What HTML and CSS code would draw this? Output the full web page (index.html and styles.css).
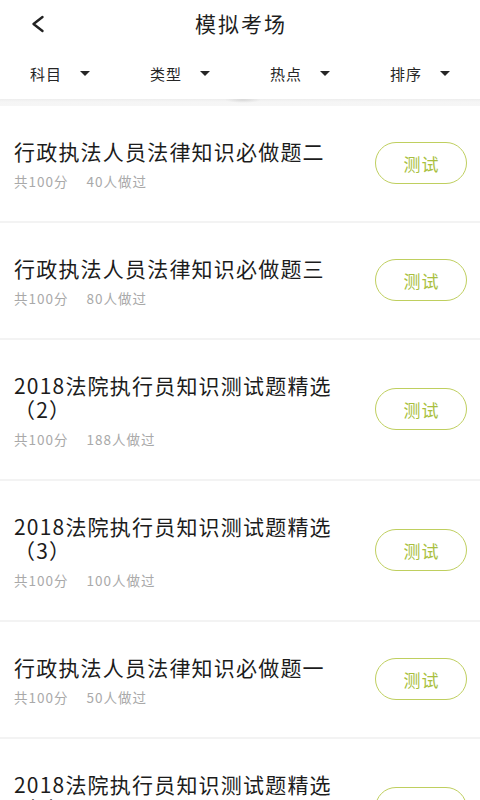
FILE: index.html
```html
<!DOCTYPE html>
<html lang="zh-CN">
<head>
<meta charset="utf-8">
<title>模拟考场</title>
<link rel="stylesheet" href="styles.css">
</head>
<body>
<div class="page">
  <header class="topbar">
    <div class="back">
      <svg width="14" height="18" viewBox="0 0 14 18"><polyline points="11.5,2 2.5,9 11.5,16" fill="none" stroke="#222" stroke-width="2.4" stroke-linecap="round" stroke-linejoin="round"/></svg>
    </div>
    <h1 class="title">模拟考场</h1>
    <div></div>
  </header>
  <nav class="filters">
    <div class="filter"><span>科目</span><i class="caret"></i></div>
    <div class="filter"><span>类型</span><i class="caret"></i></div>
    <div class="filter"><span>热点</span><i class="caret"></i></div>
    <div class="filter"><span>排序</span><i class="caret"></i></div>
  </nav>
  <div class="band"></div>
  <ul class="list">
    <li class="item">
      <div class="info">
        <div class="name">行政执法人员法律知识必做题二</div>
        <div class="meta"><span>共100分</span><span>40人做过</span></div>
      </div>
      <button class="btn">测试</button>
    </li>
    <li class="item">
      <div class="info">
        <div class="name">行政执法人员法律知识必做题三</div>
        <div class="meta"><span>共100分</span><span>80人做过</span></div>
      </div>
      <button class="btn">测试</button>
    </li>
    <li class="item">
      <div class="info">
        <div class="name">2018法院执行员知识测试题精选（2）</div>
        <div class="meta"><span>共100分</span><span>188人做过</span></div>
      </div>
      <button class="btn">测试</button>
    </li>
    <li class="item">
      <div class="info">
        <div class="name">2018法院执行员知识测试题精选（3）</div>
        <div class="meta"><span>共100分</span><span>100人做过</span></div>
      </div>
      <button class="btn">测试</button>
    </li>
    <li class="item">
      <div class="info">
        <div class="name">行政执法人员法律知识必做题一</div>
        <div class="meta"><span>共100分</span><span>50人做过</span></div>
      </div>
      <button class="btn">测试</button>
    </li>
    <li class="item">
      <div class="info">
        <div class="name">2018法院执行员知识测试题精选（4）</div>
        <div class="meta"><span>共100分</span><span>96人做过</span></div>
      </div>
      <button class="btn">测试</button>
    </li>
  </ul>
</div>
</body>
</html>
```
FILE: styles.css
```css
html, body {
  margin: 0;
  padding: 0;
  background: #ffffff;
}
body {
  font-family: "Noto Sans CJK SC", "Noto Sans", sans-serif;
  color: #222;
  width: 480px;
  height: 800px;
  overflow: hidden;
}
.page {
  display: flex;
  flex-direction: column;
}
.topbar {
  height: 46px;
  display: grid;
  grid-template-columns: 1fr auto 1fr;
  align-items: center;
}
.back {
  padding-left: 31px;
  display: flex;
  align-items: center;
  padding-top: 1px;
}
.title {
  margin: 0;
  font-size: 21px;
  font-weight: 400;
  letter-spacing: 2px;
  padding-left: 2px;
  line-height: 46px;
  color: #1e1e1e;
}
.filters {
  height: 53px;
  display: grid;
  grid-template-columns: repeat(4, 1fr);
  align-items: center;
}
.filter {
  display: flex;
  align-items: center;
  padding-left: 30px;
  gap: 18px;
  font-size: 15px;
  letter-spacing: 1px;
  color: #262626;
  padding-top: 1px;
}
.caret {
  width: 0;
  height: 0;
  border-left: 5.5px solid transparent;
  border-right: 5.5px solid transparent;
  border-top: 5px solid #262626;
  margin-top: 1px;
}
.band {
  height: 7px;
  background:
    radial-gradient(ellipse 18px 3px at 243px 1px, rgba(0,0,0,0.10), rgba(0,0,0,0) 100%),
    linear-gradient(#ededed, #f5f5f5 40%, #f6f6f6);
}
.list {
  list-style: none;
  margin: 0;
  padding: 0;
}
.item {
  display: flex;
  align-items: center;
  padding: 33px 13px 31px 14px;
  border-bottom: 2px solid #f3f3f3;
}
.info {
  flex: 1;
  min-width: 0;
  padding-right: 28px;
}
.name {
  font-size: 21px;
  line-height: 24px;
  letter-spacing: 1.2px;
  color: #1c1c1c;
}
.meta {
  margin-top: 9px;
  font-size: 13.5px;
  line-height: 18px;
  letter-spacing: 1px;
  color: #a9a9a9;
  display: flex;
  gap: 18px;
}
.btn {
  flex: none;
  width: 92px;
  height: 42px;
  border: 1.5px solid #bfcf5f;
  border-radius: 21px;
  background: #fff;
  color: #a9bf3f;
  font-family: inherit;
  font-size: 17px;
  letter-spacing: 1px;
  padding: 0 0 0 1px;
  margin-top: -3px;
}
```
